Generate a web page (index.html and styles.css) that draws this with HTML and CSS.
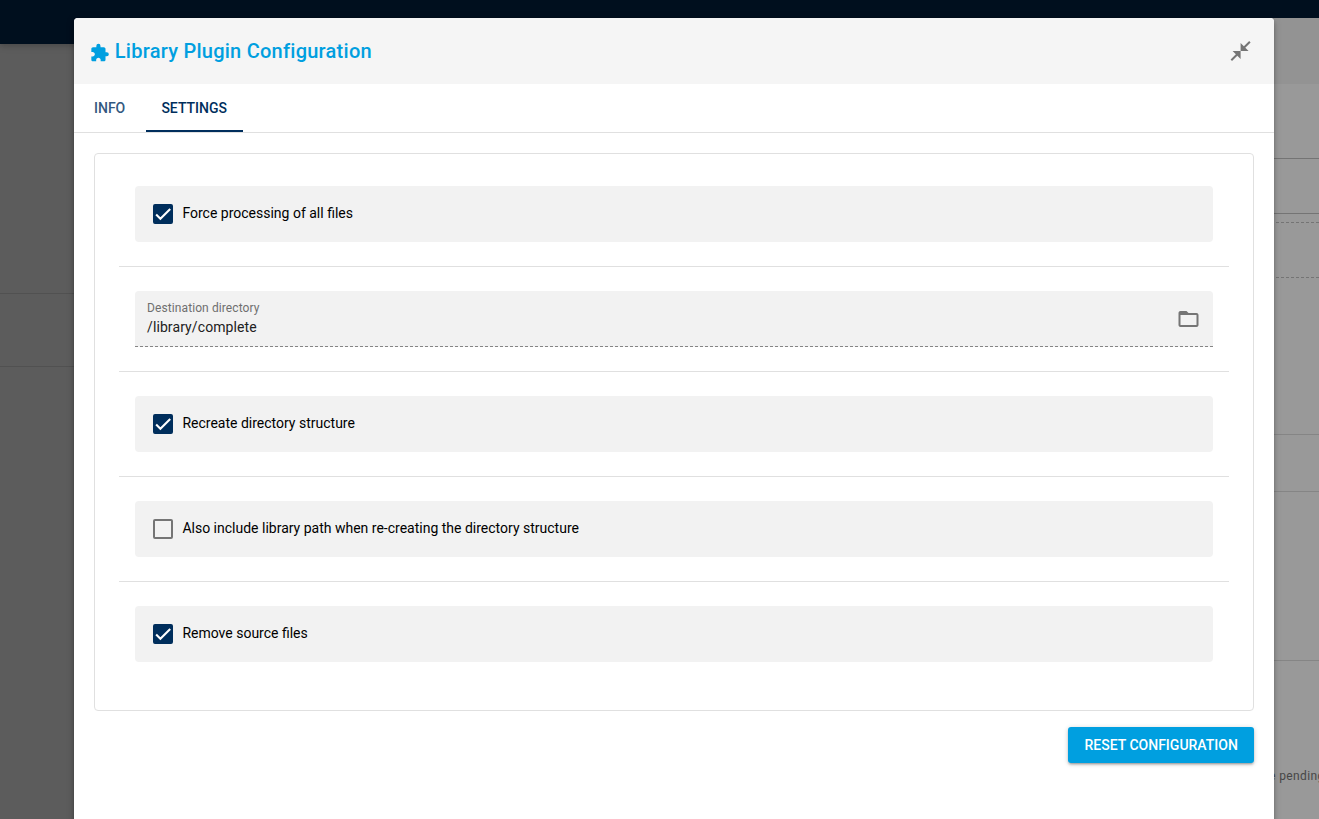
FILE: index.html
```
<!DOCTYPE html>
<html lang="en">
<head>
<meta charset="utf-8">
<title>Library Plugin Configuration</title>
<link rel="stylesheet" href="styles.css">
</head>
<body>
<div class="app">
  <div class="app-bar"></div>
  <div class="app-body">
    <div class="side-block"></div>
    <div class="side-block side-block-short"></div>
  </div>
</div>
<aside class="drawer">
  <div class="drawer-head"></div>
  <div class="drawer-row r1"></div>
  <div class="drawer-row r2"></div>
  <div class="drawer-row dashed r3"></div>
  <div class="drawer-row dashed r4"></div>
  <div class="drawer-row soft r5"></div>
  <div class="drawer-row soft r6"></div>
  <div class="drawer-row soft r7"></div>
  <p class="drawer-note">e pending</p>
</aside>
<main class="dialog">
  <header class="dialog-head">
    <h1 class="title">
      <svg class="plugin-icon" viewBox="0.4 0 24 24"><path d="M20.5 11H19V7c0-1.100-.9-2-2-2h-4V3.500a2.500 2.500 0 0 0-5 0V5H4c-1.100 0-1.990.9-1.990 2v3.800H3.500c1.490 0 2.700 1.210 2.700 2.700s-1.210 2.700-2.700 2.700H2V20c0 1.100.9 2 2 2h3.800v-1.500c0-1.490 1.210-2.700 2.700-2.700s2.700 1.210 2.700 2.700V22H17c1.100 0 2-.9 2-2v-4h1.500a2.500 2.500 0 0 0 0-5z"/></svg>
      <span>Library Plugin Configuration</span>
    </h1>
    <svg class="close-icon" viewBox="0.4 0 24 24"><path d="M22 3.410 16.710 8.700 20 12h-8V4l3.290 3.290L20.590 2 22 3.410zM3.410 22l5.290-5.290L12 20v-8H4l3.290 3.290L2 20.590 3.410 22z"/></svg>
  </header>
  <nav class="tabs">
    <div class="tab">INFO</div>
    <div class="tab tab-active">SETTINGS</div>
  </nav>
  <section class="content">
    <div class="card">
      <div class="setting"><div class="field">
        <span class="box checked"><svg viewBox="0 0 24 24"><path d="M1.730 12.910 8.100 19.280 22.790 4.590"/></svg></span>
        <span class="label">Force processing of all files</span>
      </div></div>
      <div class="setting"><div class="field field-text">
        <div class="input"><span class="caption">Destination directory</span><span class="value">/library/complete</span></div>
        <svg class="folder-icon" viewBox="0.5 0 24 24"><path d="M20 6h-8l-2-2H4c-1.100 0-1.990.9-1.990 2L2 18c0 1.100.9 2 2 2h16c1.100 0 2-.9 2-2V8c0-1.100-.9-2-2-2zm0 12H4V8h16v10z"/></svg>
      </div></div>
      <div class="setting"><div class="field">
        <span class="box checked"><svg viewBox="0 0 24 24"><path d="M1.730 12.910 8.100 19.280 22.790 4.590"/></svg></span>
        <span class="label">Recreate directory structure</span>
      </div></div>
      <div class="setting"><div class="field">
        <span class="box"></span>
        <span class="label">Also include library path when re-creating the directory structure</span>
      </div></div>
      <div class="setting"><div class="field">
        <span class="box checked"><svg viewBox="0 0 24 24"><path d="M1.730 12.910 8.100 19.280 22.790 4.590"/></svg></span>
        <span class="label">Remove source files</span>
      </div></div>
    </div>
    <div class="actions"><button class="reset">RESET CONFIGURATION</button></div>
  </section>
</main>
</body>
</html>
```
FILE: styles.css
```
* { box-sizing: border-box; }
body {
  margin: 0;
  height: 819px;
  overflow: hidden;
  position: relative;
  background: #5c5c5c;
  font-family: Roboto, "Liberation Sans", sans-serif;
  font-size: 14px;
}
.app-bar {
  height: 44px;
  background: #000f1e;
  box-shadow: 0 2px 4px rgba(0, 0, 0, .1), 0 2px 8px rgba(0, 0, 0, .12);
}
.side-block { height: 250px; border-bottom: 1px solid #515151; }
.side-block-short { height: 73px; }

/* Panel partly hidden behind the dialog */
.drawer {
  position: absolute;
  top: 18px;
  right: 0;
  width: 53px;
  height: 801px;
  background: #999;
  overflow: hidden;
}
.drawer-head { height: 66px; background: #939393; }
.drawer-row { border-bottom: 1px solid #747474; }
.dashed { border-bottom-style: dashed; }
.soft { border-bottom-color: #858585; }
.r1 { height: 75px; }
.r2 { height: 55px; }
.r3 { height: 9px; }
.r4 { height: 55px; }
.r5 { height: 157px; }
.r6 { height: 57px; }
.r7 { height: 169px; }
.drawer-note {
  margin: 105px 0 0 3px;
  font-size: 12px;
  line-height: 20px;
  letter-spacing: .4px;
  color: #474747;
  white-space: nowrap;
}

.dialog {
  position: absolute;
  top: 18px;
  left: 74px;
  width: 1200px;
  height: 820px;
  background: #fff;
  border-radius: 4px;
  overflow: hidden;
  box-shadow: 0 2px 4px -1px rgba(0, 0, 0, .2), 0 4px 5px rgba(0, 0, 0, .14), 0 1px 10px rgba(0, 0, 0, .12);
}
.dialog-head {
  display: flex;
  align-items: center;
  justify-content: space-between;
  height: 66px;
  padding: 0 21px 0 16px;
  background: #f5f5f5;
}
.title {
  display: flex;
  align-items: center;
  gap: 4.800px;
  margin: 0;
  font-size: 20px;
  font-weight: 500;
  line-height: 32px;
  letter-spacing: .25px;
  color: #009fe0;
}
.plugin-icon { width: 20px; height: 20px; margin-top: 3px; fill: currentColor; }
.close-icon { width: 24px; height: 24px; fill: #757575; }
.tabs { display: flex; height: 49px; border-bottom: 1px solid #e0e0e0; }
.tab {
  width: 72px;
  height: 48px;
  padding: 0 20px;
  font-weight: 500;
  line-height: 48px;
  color: #335880;
}
.tab-active {
  width: 97px;
  padding: 0 .6px 0 0;
  text-align: center;
  color: #002e5c;
  border-bottom: 2px solid #002e5c;
}
.content { padding: 20px; }
.card {
  height: 558px;
  padding: 8px 24px 24px;
  border: 1px solid #e0e0e0;
  border-radius: 4px;
}
.setting { padding: 24px 16px; border-bottom: 1px solid #e0e0e0; }
.setting:last-child { border-bottom: 0; }
.field {
  display: flex;
  align-items: center;
  gap: 9.400px;
  height: 56px;
  padding: 0 18px;
  background: #f2f2f2;
  border-radius: 4px;
}
.box {
  display: flex;
  width: 20px;
  height: 20px;
  border: 2px solid #757575;
  border-radius: 2px;
}
.box.checked { background: #002e5c; border-color: #002e5c; }
.box svg { width: 16px; height: 16px; fill: none; stroke: #fff; stroke-width: 3.12; }
.label { line-height: 20px; margin-top: -2px; color: #000; }
.field-text {
  justify-content: space-between;
  padding: 0 12px;
  border-bottom: 1px dashed #858585;
  border-radius: 4px 4px 0 0;
}
.input { display: flex; flex-direction: column; margin-top: -2px; }
.caption { font-size: 12px; line-height: 18px; letter-spacing: .1px; color: #6f6f6f; }
.value { line-height: 20px; letter-spacing: .1px; color: #212121; }
.folder-icon { width: 24px; height: 24px; fill: #757575; }
.actions { display: flex; justify-content: flex-end; padding-top: 16px; }
.reset {
  width: 186px;
  height: 36px;
  padding: 0 0 0 .4px;
  border: 0;
  border-radius: 3px;
  background: #009fe0;
  color: #fff;
  font: 500 14px/36px Roboto, "Liberation Sans", sans-serif;
  box-shadow: 0 1px 5px rgba(0, 0, 0, .2), 0 2px 2px rgba(0, 0, 0, .14), 0 3px 1px -2px rgba(0, 0, 0, .12);
}
```
